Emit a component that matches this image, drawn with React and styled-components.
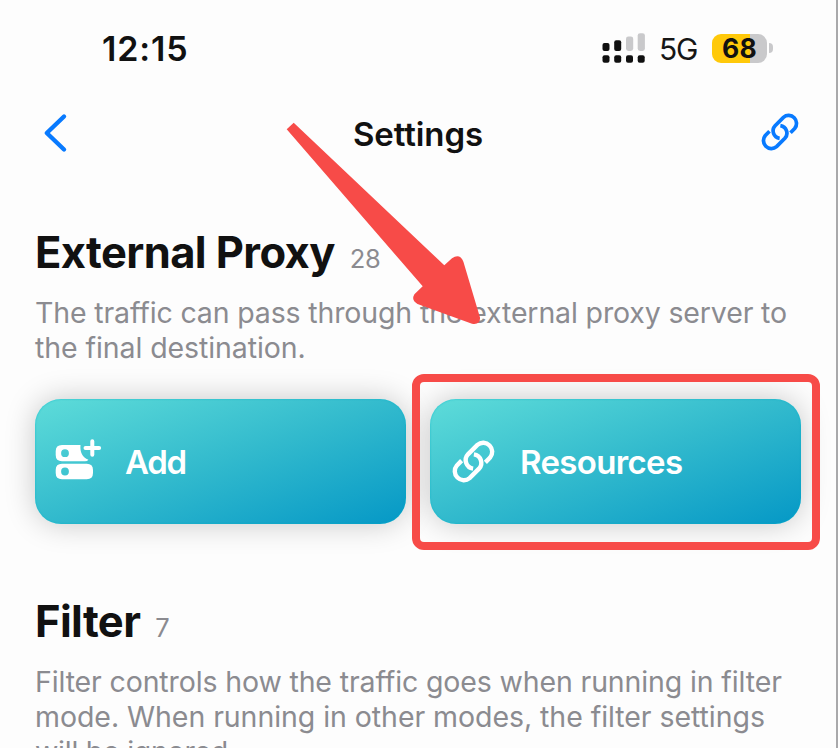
import React from "react";
import styled, { createGlobalStyle } from "styled-components";

const Global = createGlobalStyle`
  * { box-sizing: border-box; }
  body { margin: 0; background: #fdfdfd; overflow: hidden; }
`;

const Screen = styled.main`
  position: relative;
  width: 838px;
  height: 748px;
  overflow: hidden;
  background: #fdfdfd;
  border-right: 2px solid #a9a9ab;
  font-family: Inter, "Liberation Sans", sans-serif;
  color: #111;
`;

const StatusBar = styled.div`
  height: 96px;
  padding: 1px 63px 0 101px;
  display: flex;
  align-items: center;
  justify-content: space-between;
`;

const Clock = styled.span`
  padding-left: 1px;
  font-size: 34px;
  line-height: 40px;
  font-weight: 600;
  letter-spacing: 0.85px;
`;

const StatusIcons = styled.div`
  display: flex;
  align-items: center;
  margin-top: -1px;
`;

const Network = styled.span`
  margin: 2px 0 0 13px;
  width: 53px;
  font-size: 30px;
  line-height: 36px;
  letter-spacing: -1.2px;
  color: #161616;
`;

const Battery = styled.div`
  width: 55px;
  height: 29px;
  border-radius: 9px;
  background: linear-gradient(90deg, #ffc90a 0 37.5px, #c9c9cb 37.5px);
  text-align: center;
  font-size: 26.5px;
  line-height: 28px;
  font-weight: 700;
  letter-spacing: 0.3px;
`;

const BatteryTip = styled.span`
  width: 4px;
  height: 10px;
  margin-left: 2px;
  border-radius: 0 5px 5px 0;
  background: #c9c9cb;
`;

const NavBar = styled.header`
  height: 74px;
  padding: 0 37px 0 43px;
  display: grid;
  grid-template-columns: 40px 1fr 38px;
  align-items: center;
`;

const Title = styled.h1`
  margin: 0;
  padding: 1px 8px 0 0;
  text-align: center;
  font-size: 33px;
  line-height: 40px;
  font-weight: 600;
  letter-spacing: -0.1px;
`;

const NavAction = styled.span`
  display: flex;
  margin-top: -2px;
`;

const Section = styled.section`
  padding: ${(p) => p.$top}px 0 0 35px;
`;

const SectionHead = styled.div`
  display: flex;
  align-items: baseline;
  gap: 15px;
`;

const Heading = styled.h2`
  margin: 0;
  font-size: 43.5px;
  line-height: 52px;
  font-weight: 700;
  letter-spacing: -0.6px;
`;

const Count = styled.span`
  font-size: 25.5px;
  line-height: 30px;
  font-weight: 400;
  letter-spacing: -0.3px;
  color: #8b8b90;
`;

const Description = styled.p`
  margin: 17px 0 0;
  font-size: 28.5px;
  line-height: 35px;
  color: #8b8b90;
`;

const TextLine = styled.span`
  display: block;
  white-space: nowrap;
  letter-spacing: ${(p) => p.$track}px;
`;

const Actions = styled.div`
  display: flex;
  gap: 24px;
  margin-top: 34px;
`;

const ActionCard = styled.button`
  position: relative;
  width: 371px;
  height: 125px;
  padding: 0 0 0 20px;
  border: 0;
  border-radius: 26px;
  display: flex;
  align-items: center;
  background: linear-gradient(to bottom right, #5edcd9, #32bacd 50%, #0598c6);
  box-shadow: 0 0 30px rgba(0, 0, 0, 0.22), inset 0 0 2px rgba(0, 180, 200, 0.8);
  color: #fff;
  font-family: inherit;
  text-align: left;
`;

const ActionIcon = styled.span`
  width: 70px;
  height: 46px;
  padding: 0 0 ${(p) => p.$lift}px ${(p) => p.$inset}px;
  display: flex;
  align-items: center;
`;

const ActionLabel = styled.span`
  font-size: 33px;
  line-height: 40px;
  font-weight: 600;
  letter-spacing: ${(p) => p.$track}px;
`;

const Highlight = styled.div`
  position: absolute;
  inset: -25px -19px -26px -18px;
  border: 8px solid #f74b48;
  border-radius: 12px;
  pointer-events: none;
`;

const ArrowOverlay = styled.svg`
  position: absolute;
  left: 280px;
  top: 115px;
  pointer-events: none;
`;

function SignalIcon() {
  return (
    <svg width="44" height="32" viewBox="0 0 44 32">
      <g fill="#101010">
        <rect x="0.5" y="11" width="7" height="8" rx="2" />
        <rect x="12.2" y="8.2" width="7" height="10.8" rx="2" />
        <rect x="0.5" y="23.2" width="7" height="7.6" rx="2" />
        <rect x="12.2" y="23.2" width="7" height="7.6" rx="2" />
        <rect x="24" y="23.2" width="7" height="7.6" rx="2" />
        <rect x="35.7" y="23.2" width="7" height="7.6" rx="2" />
      </g>
      <g fill="#c9c9cb">
        <rect x="24" y="4.4" width="7.2" height="14.6" rx="2.4" />
        <rect x="35.7" y="1.2" width="7.2" height="17.8" rx="2.4" />
      </g>
    </svg>
  );
}

function ChevronIcon() {
  return (
    <svg width="26" height="40" viewBox="0 0 26 40">
      <path d="M21 3.5L3.8 20L21 36.5" fill="none" stroke="#087aff" strokeWidth="4.4" strokeLinecap="round" strokeLinejoin="round" />
    </svg>
  );
}

function LinkIcon({ size, color, weight }) {
  return (
    <svg width={size} height={size} viewBox="0 0 42 42" fill="none" stroke={color} strokeWidth={weight}>
      <path d="M32.6 21.8L37.2 17.2A8.8 8.8 0 0 0 24.8 4.8L15.6 14A8.4 8.4 0 0 0 20.6 28" />
      <path d="M9.4 20.2L4.8 24.8A8.8 8.8 0 0 0 17.2 37.2L26.4 28A8.4 8.4 0 0 0 21.4 14" />
    </svg>
  );
}

function ServerAddIcon() {
  return (
    <svg width="47" height="42" viewBox="0 0 47 42">
      <path
        fill="#fff"
        fillRule="evenodd"
        d="M7 6H25.5C24.8 13 27.5 18.7 33.4 20.7Q32.3 22.2 30 22.2H7Q0.7 22.2 0.7 16V12.2Q0.7 6 7 6ZM10 10.3A3.9 3.9 0 1 0 10 18.1A3.9 3.9 0 1 0 10 10.3Z"
      />
      <path
        fill="#fff"
        fillRule="evenodd"
        d="M7 24.8H31.7Q38 24.8 38 31V34Q38 40.2 31.7 40.2H7Q0.7 40.2 0.7 34V31Q0.7 24.8 7 24.8ZM10 28.6A3.9 3.9 0 1 0 10 36.4A3.9 3.9 0 1 0 10 28.6Z"
      />
      <path d="M37.3 2.2V15.8M30.5 9H44.1" stroke="#fff" strokeWidth="4" strokeLinecap="round" />
    </svg>
  );
}

export default function App() {
  return (
    <>
      <Global />
      <Screen>
        <StatusBar>
          <Clock>12:15</Clock>
          <StatusIcons>
            <SignalIcon />
            <Network>5G</Network>
            <Battery>68</Battery>
            <BatteryTip />
          </StatusIcons>
        </StatusBar>
        <NavBar>
          <ChevronIcon />
          <Title>Settings</Title>
          <NavAction>
            <LinkIcon size={38} color="#087aff" weight={4.1} />
          </NavAction>
        </NavBar>
        <Section $top={56}>
          <SectionHead>
            <Heading>External Proxy</Heading>
            <Count>28</Count>
          </SectionHead>
          <Description>
            <TextLine $track={-0.143}>The traffic can pass through the external proxy server to</TextLine>
            <TextLine $track={-0.088}>the final destination.</TextLine>
          </Description>
          <Actions>
            <ActionCard>
              <ActionIcon $lift={3} $inset={0}><ServerAddIcon /></ActionIcon>
              <ActionLabel $track={-1.3}>Add</ActionLabel>
            </ActionCard>
            <ActionCard>
              <ActionIcon $lift={1} $inset={2}><LinkIcon size={43} color="#fff" weight={4.3} /></ActionIcon>
              <ActionLabel $track={-0.65}>Resources</ActionLabel>
              <Highlight />
            </ActionCard>
          </Actions>
        </Section>
        <Section $top={71}>
          <SectionHead>
            <Heading>Filter</Heading>
            <Count>7</Count>
          </SectionHead>
          <Description>
            <TextLine $track={-0.13}>Filter controls how the traffic goes when running in filter</TextLine>
            <TextLine $track={-0.055}>mode. When running in other modes, the filter settings</TextLine>
            <TextLine $track={-0.25}>will be ignored.</TextLine>
          </Description>
        </Section>
        <ArrowOverlay width="210" height="215" viewBox="280 115 210 215">
          <path
            fill="#f74b48"
            d="M293.7 122.7L444.3 265.3L452 258.2Q459.8 253 463.4 261.7L480 317.5Q480.5 325 472 323.7L417.5 304Q410.8 300 414.4 294.3L422.7 286.3L286.7 129.3Z"
          />
        </ArrowOverlay>
      </Screen>
    </>
  );
}
